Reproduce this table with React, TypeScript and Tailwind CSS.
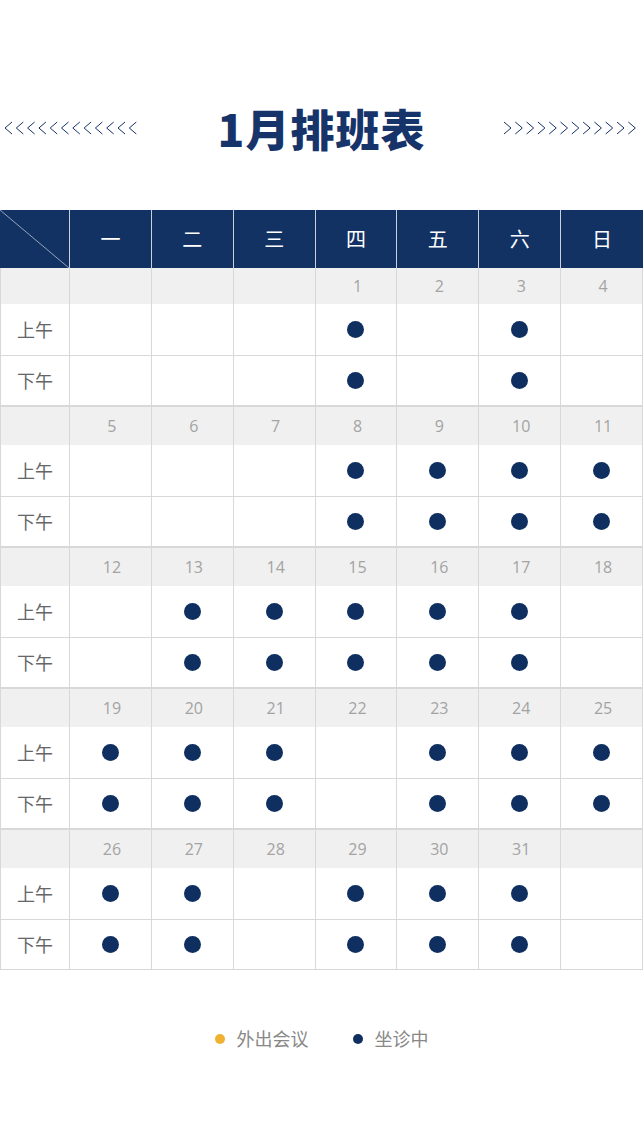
import React from 'react';

const NAVY = '#133264';

const DAY_NAMES = ['一', '二', '三', '四', '五', '六', '日'];

// 每周: 日期 + 上午/下午坐诊
const WEEKS: { days: (number | null)[]; on: number[] }[] = [
  { days: [null, null, null, 1, 2, 3, 4], on: [1, 3] },
  { days: [5, 6, 7, 8, 9, 10, 11], on: [8, 9, 10, 11] },
  { days: [12, 13, 14, 15, 16, 17, 18], on: [13, 14, 15, 16, 17] },
  { days: [19, 20, 21, 22, 23, 24, 25], on: [19, 20, 21, 23, 24, 25] },
  { days: [26, 27, 28, 29, 30, 31, null], on: [26, 27, 29, 30, 31] },
];

const ROW = 'grid grid-cols-[70px_repeat(7,minmax(0,1fr))]';
const CJK = "font-['Noto_Sans_CJK_SC',sans-serif]";

const Chevrons = ({ dir }: { dir: 'left' | 'right' }) => (
  <svg width="136" height="14" viewBox="0 0 136 14" className="shrink-0">
    {Array.from({ length: 12 }).map((_, i) => {
      const x = i * 11.3 + 1;
      const d =
        dir === 'left'
          ? `M${x + 7} 1 L${x} 7 L${x + 7} 13`
          : `M${x} 1 L${x + 7} 7 L${x} 13`;
      return <path key={i} d={d} fill="none" stroke={NAVY} strokeWidth="1" />;
    })}
  </svg>
);

const Dot = () => <span className="block w-[17px] h-[17px] rounded-full bg-[#0f2f60]" />;

const Week = ({ days, on, first }: { days: (number | null)[]; on: number[]; first: boolean }) => (
  <div className={first ? '' : 'border-t-2 border-[#d8d8d8]'}>
    <div className={`${ROW} ${first ? 'h-[36px]' : 'h-[38px]'} bg-[#f0f0f0]`}>
      <div className="border-l border-r border-[#d8d8d8]" />
      {days.map((d, i) => (
        <div
          key={i}
          className="flex items-center justify-center pl-[3px] border-r border-[#d8d8d8] text-[16px] text-[#a3a3a3] font-['Open_Sans',sans-serif]"
        >
          {d ?? ''}
        </div>
      ))}
    </div>
    {['上午', '下午'].map((label, r) => (
      <div
        key={label}
        className={`${ROW} ${r === 0 ? 'h-[51px]' : 'h-[50px] border-t border-[#d8d8d8]'} bg-white`}
      >
        <div className={`flex items-center pl-[16px] border-l border-r border-[#d8d8d8] text-[18px] text-[#666] ${CJK}`}>
          {label}
        </div>
        {days.map((d, i) => (
          <div key={i} className="flex items-center justify-center border-r border-[#d8d8d8]">
            {d !== null && on.includes(d) && <Dot />}
          </div>
        ))}
      </div>
    ))}
  </div>
);

export default function App() {
  return (
    <div className={`w-[643px] h-[1143px] bg-white ${CJK}`}>
      {/* 标题 */}
      <div className="flex items-center justify-between h-[210px] px-[4px] pt-[46px]">
        <Chevrons dir="left" />
        <h1 className={`text-[44px] font-black leading-none text-[#16336a] tracking-[1px] ${CJK}`}>1月排班表</h1>
        <Chevrons dir="right" />
      </div>

      {/* 表格 */}
      <div className="border-b border-[#d8d8d8]">
        <div className={`${ROW} h-[58px] bg-[#133264]`}>
          <div className="relative border-r border-[#c9d0dc]">
            <svg className="absolute inset-0 w-full h-full" preserveAspectRatio="none" viewBox="0 0 70 58">
              <line x1="0" y1="0" x2="70" y2="58" stroke="#b8c2d2" strokeWidth="0.8" />
            </svg>
          </div>
          {DAY_NAMES.map((n, i) => (
            <div
              key={n}
              className={`flex items-center justify-center text-[20px] text-white ${i < 6 ? 'border-r border-[#c9d0dc]' : ''}`}
            >
              {n}
            </div>
          ))}
        </div>
        {WEEKS.map((w, i) => (
          <Week key={i} days={w.days} on={w.on} first={i === 0} />
        ))}
      </div>

      {/* 图例 */}
      <div className="flex items-center justify-center gap-[44px] mt-[55px]">
        <div className="flex items-center gap-[12px]">
          <span className="w-[10px] h-[10px] rounded-full bg-[#f0b030]" />
          <span className="text-[18px] text-[#888]">外出会议</span>
        </div>
        <div className="flex items-center gap-[12px]">
          <span className="w-[10px] h-[10px] rounded-full bg-[#0f2f60]" />
          <span className="text-[18px] text-[#888]">坐诊中</span>
        </div>
      </div>
    </div>
  );
}
